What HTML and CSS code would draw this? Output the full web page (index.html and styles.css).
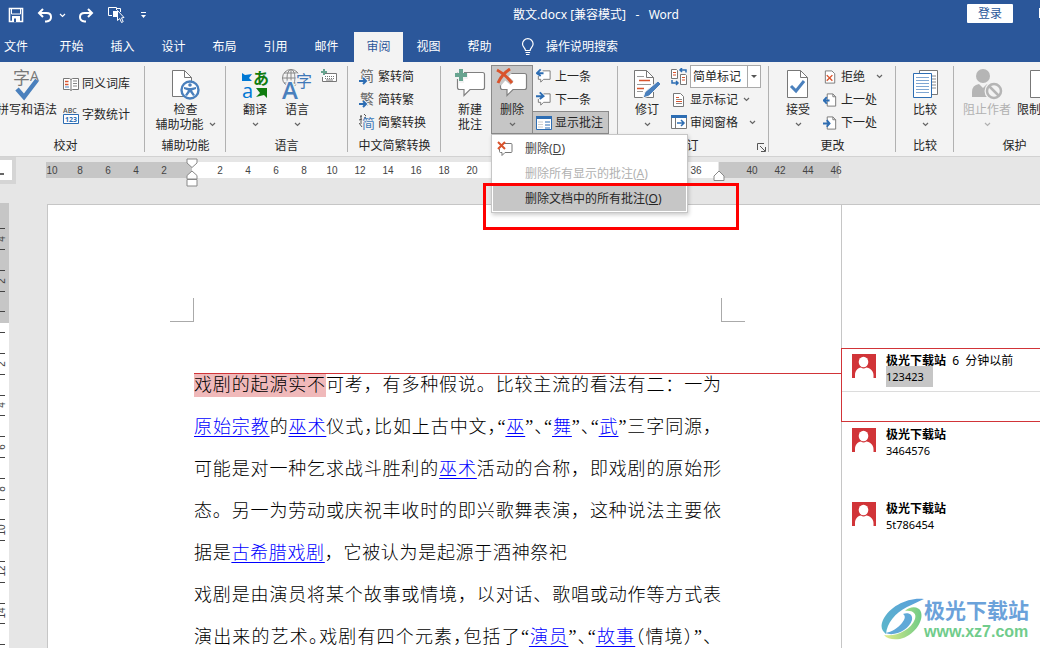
FILE: index.html
```
<!DOCTYPE html>
<html lang="zh-CN">
<head>
<meta charset="utf-8">
<meta name="viewport" content="width=device-width, initial-scale=1">
<title>散文.docx - Word</title>
<link rel="stylesheet" href="styles.css">
</head>
<body>
<svg class="defs" aria-hidden="true">
  <symbol id="chev" viewBox="0 0 7 5"><path d="M1 1l2.500 2.500L6 1" fill="none" stroke="currentColor" stroke-width="1.200"/></symbol>
  <symbol id="person" viewBox="0 0 24 24"><path fill="#d13438" d="M0 0h24v24H0z"/><ellipse cx="11.500" cy="8" rx="4.800" ry="5.300" fill="#fff"/><path fill="#fff" d="M3 24v-3c0-4 2.500-7 6-7.500 1.500 1.200 3.800 1.200 5.200 0 4 .5 7.300 3.500 7.300 7.500v3z"/></symbol>
  <symbol id="doc" viewBox="0 0 16 16"><path d="M4.500 1.500h6l3 3v10h-9z" fill="#fff" stroke="#777"/><path d="M10.500 1.500v3h3" fill="none" stroke="#777"/></symbol>
</svg>

<div class="app">
  <header class="titlebar">
    <div class="quick">
      <button type="button" class="q-save" aria-label="保存"><svg width="16" height="16" viewBox="0 0 16 16"><path d="M1.500 1.500h13v13h-13z" fill="none" stroke="#fff" stroke-width="1.600"/><path d="M3.500 2v5h9V2" fill="none" stroke="#fff"/><path d="M4 9h8v6H4z" fill="#fff"/><path d="M6 11.500h2V15H6z" fill="#2b579a"/></svg></button>
      <button type="button" class="q-undo" aria-label="撤消"><svg width="16" height="15" viewBox="0 0 16 15"><path d="M6 1L2 5l4 4M2 5h7.500c6 0 6 8 0 8.500H8" fill="none" stroke="#fff" stroke-width="2"/></svg></button>
      <button type="button" class="q-undo-more" aria-label="撤消选项"><svg width="7" height="5"><use href="#chev"/></svg></button>
      <button type="button" class="q-redo" aria-label="恢复"><svg width="16" height="15" viewBox="0 0 16 15"><path d="M10 1l4 4-4 4M14 5H6.500c-6 0-6 8 0 8.500H8" fill="none" stroke="#fff" stroke-width="2"/></svg></button>
      <button type="button" class="q-touch" aria-label="触摸模式"><svg width="18" height="18" viewBox="0 0 18 18"><path d="M5 9.500H1.500v-8h8V4M9.500 2.500h4V6" fill="none" stroke="#fff"/><path d="M6 5h4v6H6z" fill="#fff"/><path d="M10.500 4.500v10l2.300-2 1.700 4 1.700-.8-1.700-3.800 2.500-.4z" fill="#2b579a" stroke="#fff"/></svg></button>
      <button type="button" class="q-more" aria-label="自定义"><svg width="7" height="8" viewBox="0 0 7 8"><path d="M1 1.500h5" stroke="#fff"/><path d="M1 4h5L3.500 7z" fill="#fff"/></svg></button>
    </div>
    <h1 class="doc-title">散文.docx [兼容模式] &nbsp;&nbsp;- &nbsp;&nbsp;Word</h1>
    <div class="account"><button type="button" class="login">登录</button><span class="window-edge"></span></div>
  </header>

  <nav class="tabs" aria-label="功能区选项卡">
    <button type="button" class="tab file">文件</button>
    <button type="button" class="tab">开始</button>
    <button type="button" class="tab">插入</button>
    <button type="button" class="tab">设计</button>
    <button type="button" class="tab">布局</button>
    <button type="button" class="tab">引用</button>
    <button type="button" class="tab">邮件</button>
    <button type="button" class="tab active">审阅</button>
    <button type="button" class="tab">视图</button>
    <button type="button" class="tab">帮助</button>
    <button type="button" class="tell-me"><svg width="14" height="18" viewBox="0 0 14 18"><path d="M4.500 12.500c0-2.500-3-3.500-3-6.500a5.300 5.300 0 0 1 10.600 0c0 3-3 4-3 6.500zM4.500 14.500h4.600M5 16.500h3.500" fill="none" stroke="#fff" stroke-width="1.200"/></svg><span>操作说明搜索</span></button>
  </nav>

  <div class="ribbon">
    <section class="group g-proof">
      <div class="tools">
        <button type="button" class="big"><span class="pic"><svg width="28" height="34" viewBox="0 0 28 34"><text x="0" y="17" font-size="17" fill="#777">字</text><text x="17" y="14" font-size="14" class="latin" fill="#777">A</text><path d="M4 22l7 8 13-17" fill="none" stroke="#4a80bd" stroke-width="4.500"/></svg></span><span>拼写和语法</span></button>
        <div class="stack two">
          <button type="button" class="row"><svg width="16" height="16" viewBox="0 0 16 16"><path d="M.5 2.500h6l1.500 1 1.500-1h6v11h-6l-1.500 1-1.500-1h-6zM8 3v11" fill="#fff" stroke="#777"/><path d="M2 5.500h3.500M2 8.500h3.500" stroke="#d9532c" stroke-width="1.500"/><path d="M2 11h4" stroke="#4a80bd"/><path d="M10 5h4M10 7.500h4M10 10h4" stroke="#888"/></svg><span>同义词库</span></button>
          <button type="button" class="row"><svg width="16" height="18" viewBox="0 0 16 18"><text x="0" y="7" font-size="7" font-weight="600" class="latin" fill="#555">ABC</text><path d="M.5 8.500h15v9H.5z" fill="#fff" stroke="#2d6db3"/><text x="2" y="16" font-size="7" font-weight="bold" class="latin" fill="#2d6db3">123</text></svg><span>字数统计</span></button>
        </div>
      </div>
      <h2>校对</h2>
    </section>

    <section class="group g-access">
      <div class="tools">
        <button type="button" class="big"><span class="pic"><svg width="30" height="32" viewBox="0 0 30 32"><path d="M2.500 2.500h12l7 7v19h-19z" fill="#fff" stroke="#777"/><path d="M14.500 2.500v7h7" fill="none" stroke="#777"/><circle cx="20" cy="22" r="8.500" fill="#fff" stroke="#4a80bd" stroke-width="2.400"/><g fill="#4a80bd"><circle cx="20" cy="17" r="1.800"/><path d="M14 19l5 1h2l5-1v2l-4 1.500 3 4.500-2 1-3-4-3 4-2-1 3-4.500L14 21z"/></g></svg></span><span>检查</span><span class="line2">辅助功能 <svg width="7" height="5"><use href="#chev"/></svg></span></button>
      </div>
      <h2>辅助功能</h2>
    </section>

    <section class="group g-lang">
      <div class="tools">
        <button type="button" class="big w42"><span class="pic"><svg width="28" height="32" viewBox="0 0 28 32"><text x="12" y="16" font-size="16" font-weight="bold" fill="#107c10">あ</text><text x="1" y="30" font-size="20" class="latin" fill="#0078d4">a</text><path d="M1 5l3 2 7-1-3 4 3 3H1z" fill="#0078d4"/><path d="M15 20h11v10l-3-3-8 2 4-4z" fill="#107c10"/></svg></span><span>翻译</span><svg width="7" height="5"><use href="#chev"/></svg></button>
        <button type="button" class="big w42"><span class="pic"><svg width="32" height="32" viewBox="0 0 32 32"><g fill="none" stroke="#888"><circle cx="10" cy="10" r="8.500"/><ellipse cx="10" cy="10" rx="4" ry="8.500"/><path d="M1 10h18M3 5h14M3 15h14M10 1v18"/></g><text x="15" y="19" font-size="16" fill="#3f78b8" stroke="#f3f3f3" stroke-width="3" paint-order="stroke">字</text><text x="1" y="31" font-size="24" font-weight="600" class="latin" fill="#4a80bd" stroke="#f3f3f3" stroke-width="3" paint-order="stroke">A</text></svg></span><span>语言</span><svg width="7" height="5"><use href="#chev"/></svg></button>
        <button type="button" class="keyboard" aria-label="更新输入法词典"><svg width="16" height="14" viewBox="0 0 16 14"><path d="M3.500 4.500h12v8h-14V8" fill="#fff" stroke="#777"/><path d="M4 7.500h10M4 9.500h10" stroke="#777" stroke-dasharray="1 1"/><path d="M5 11h7" stroke="#777"/><path d="M0 3h6M3 0v6" stroke="#68a490" stroke-width="2"/></svg></button>
      </div>
      <h2>语言</h2>
    </section>

    <section class="group g-convert">
      <div class="tools">
        <div class="stack">
          <button type="button" class="row"><svg width="16" height="18" viewBox="0 0 16 18"><text x="1" y="13" font-size="14" fill="#666">简</text><path d="M0 13h6M4 10l3 3-3 3" fill="none" stroke="#f3f3f3" stroke-width="4"/><path d="M0 13h6M4 10l3 3-3 3" fill="none" stroke="#2d6db3" stroke-width="2"/></svg><span>繁转简</span></button>
          <button type="button" class="row"><svg width="16" height="18" viewBox="0 0 16 18"><text x="1" y="13" font-size="14" fill="#666">繁</text><path d="M0 13h6M4 10l3 3-3 3" fill="none" stroke="#f3f3f3" stroke-width="4"/><path d="M0 13h6M4 10l3 3-3 3" fill="none" stroke="#2d6db3" stroke-width="2"/></svg><span>简转繁</span></button>
          <button type="button" class="row"><svg width="16" height="18" viewBox="0 0 16 18"><path d="M1 3l2-1M0 6l3-1M2 1v9M0 9l3 4M5 0l2 2M5 4l2-1" stroke="#555" fill="none"/><text x="3" y="14" font-size="13" fill="#3f78b8">简</text></svg><span>简繁转换</span></button>
        </div>
      </div>
      <h2>中文简繁转换</h2>
    </section>

    <section class="group g-comment">
      <div class="tools">
        <button type="button" class="big w42"><span class="pic"><svg width="32" height="32" viewBox="0 0 32 32"><path d="M3.500 6.500q0-2 2-2h23q2 0 2 2v13q0 2-2 2H16l-6 6v-6H5.500q-2 0-2-2z" fill="#fff" stroke="#808080" stroke-width="1.200"/><path d="M0 8h14M7 0v15" stroke="#f3f3f3" stroke-width="6"/><path d="M1 7h12M7 1v12" stroke="#68a490" stroke-width="4"/></svg></span><span>新建</span><span>批注</span></button>
        <div class="delete-wrap">
          <button type="button" class="big pressed" aria-expanded="true"><span class="pic"><svg width="32" height="32" viewBox="0 0 32 32"><path d="M4.500 7.500q0-2 2-2h22q2 0 2 2v12q0 2-2 2H17l-6 6v-6H6.500q-2 0-2-2z" fill="#fff" stroke="#808080" stroke-width="1.200"/><path d="M2 3l14 12M15 2L3 16" stroke="#c6c6c6" stroke-width="5"/><path d="M1 2q8 4 15 13M14 1Q6 6 2 15" fill="none" stroke="#d9532c" stroke-width="3"/></svg></span><span>删除</span><svg width="7" height="5"><use href="#chev"/></svg></button>
          <div class="menu" role="menu">
            <button type="button" role="menuitem"><svg width="16" height="16" viewBox="0 0 16 16"><path d="M7 2.500h7q1 0 1 1v7q0 1-1 1H8l-3 3v-3H3.500q-1 0-1-1V8" fill="#fff" stroke="#777"/><path d="M1 1l7 7M8 1L1 8" stroke="#d9532c" stroke-width="2"/></svg><span>删除(<u>D</u>)</span></button>
            <button type="button" role="menuitem" disabled><span>删除所有显示的批注(<u>A</u>)</span></button>
            <button type="button" role="menuitem" class="chosen"><span>删除文档中的所有批注(<u>O</u>)</span></button>
          </div>
        </div>
        <div class="stack">
          <button type="button" class="row"><svg width="16" height="17" viewBox="0 0 17 17"><path d="M7 2.500h8v9H8l-3 3v-3H2.500V8" fill="#fff" stroke="#777"/><path d="M1 5h7M5 1L1 5l4 3" fill="none" stroke="#2d6db3" stroke-width="2"/></svg><span>上一条</span></button>
          <button type="button" class="row"><svg width="16" height="17" viewBox="0 0 17 17"><path d="M8 2.500h7v9H8l-3 3v-3H2.500V8" fill="#fff" stroke="#777"/><path d="M0 5h7M4 1l4 4-4 3" fill="none" stroke="#2d6db3" stroke-width="2"/></svg><span>下一条</span></button>
          <button type="button" class="row pressed"><svg width="16" height="14" viewBox="0 0 16 14"><path d="M.5.5h15v13H.5z" fill="#fff" stroke="#2d6db3"/><path d="M0 0h16v3H0z" fill="#2d6db3"/><path d="M9 6h5M9 9h5M9 12h5" stroke="#2d6db3"/><path d="M2 6h5M2 8.500h5M2 11h5" stroke="#ccc"/></svg><span>显示批注</span></button>
        </div>
      </div>
    </section>

    <section class="group g-track">
      <div class="tools">
        <button type="button" class="big w42"><span class="pic"><svg width="30" height="32" viewBox="0 0 30 32"><path d="M2.500 2.500h12l7 7v20h-19z" fill="#fff" stroke="#777"/><path d="M14.500 2.500v7h7" fill="none" stroke="#777"/><path d="M5 8.500h7M5 16.500h14M5 23.500h6" stroke="#999"/><path d="M7 12.500h11M5 20.500h7" stroke="#d9532c" stroke-width="1.500"/><path d="M11 30l2-6L26 13l3 3-12 12z" fill="#4a80bd" stroke="#f3f3f3"/></svg></span><span>修订</span><svg width="7" height="5"><use href="#chev"/></svg></button>
        <div class="stack">
          <div class="row combo-row"><svg width="16" height="18" viewBox="0 0 16 18"><path d="M.5 1.500h5l1 1v8h-6zM9.500 6.500h5l1 1v9h-6z" fill="#fff" stroke="#777"/><path d="M2 4.500h3M2 7h3M11 9.500h3M11 12h3" stroke="#d9532c"/><path d="M15 4.500V2H9M11 0L9 2l2 2M1 12v3h6M5 13l2 2-2 2" fill="none" stroke="#2d6db3" stroke-width="1.500"/></svg><label class="combo"><select aria-label="标记显示方式"><option>简单标记</option></select><svg class="drop" width="13" height="21" viewBox="0 0 13 21"><path d="M.5 0v21" stroke="#aaa"/><path d="M4 9h6l-3 3z" fill="#555"/></svg></label></div>
          <button type="button" class="row"><svg width="16" height="16" viewBox="0 0 16 16"><path d="M2.500 1.500h7l3 3v10h-10z" fill="#fff" stroke="#777"/><path d="M5 5.500h3M5 9.500h6" stroke="#d9532c"/><path d="M5 7.500h6M5 11.500h6" stroke="#888"/></svg><span>显示标记</span><svg class="gap2" width="7" height="5"><use href="#chev"/></svg></button>
          <button type="button" class="row"><svg width="16" height="15" viewBox="0 0 16 15"><path d="M.5.5h15v13H.5z" fill="#fff" stroke="#777"/><path d="M0 0h16v3H0z" fill="#2d6db3"/><path d="M4.500 3v11" stroke="#777"/><path d="M6 8h7M10 5l3 3-3 3" fill="none" stroke="#2d6db3" stroke-width="1.500"/></svg><span>审阅窗格</span><svg class="gap8" width="7" height="5"><use href="#chev"/></svg></button>
        </div>
      </div>
      <h2>修订</h2>
      <button type="button" class="launcher" aria-label="修订选项"><svg width="9" height="9" viewBox="0 0 9 9"><path d="M.5 7V.5H7M3 3l5 5M8.500 4v4.500H4" fill="none" stroke="#555"/></svg></button>
    </section>

    <section class="group g-change">
      <div class="tools">
        <button type="button" class="big w42"><span class="pic"><svg width="24" height="32" viewBox="0 0 24 32"><path d="M1.500 2.500h13l7 7v20h-20z" fill="#fff" stroke="#777"/><path d="M14.500 2.500v7h7" fill="none" stroke="#777"/><path d="M5 18l5 5 8-10" fill="none" stroke="#4a80bd" stroke-width="3"/></svg></span><span>接受</span><svg width="7" height="5"><use href="#chev"/></svg></button>
        <div class="stack">
          <button type="button" class="row"><svg width="15" height="16" viewBox="0 0 16 16"><path d="M2.500 1.500h7l3 3v10h-10z" fill="#fff" stroke="#777"/><path d="M4 6l6 6M10 6l-6 6" stroke="#d9532c" stroke-width="1.500"/></svg><span>拒绝</span><svg class="gap8" width="7" height="5"><use href="#chev"/></svg></button>
          <button type="button" class="row"><svg width="15" height="16" viewBox="0 0 16 16"><use href="#doc" width="16" height="16"/><path d="M0 8.500h7M4 5L1 8.500 4 12" fill="none" stroke="#2d6db3" stroke-width="2"/></svg><span>上一处</span></button>
          <button type="button" class="row"><svg width="15" height="16" viewBox="0 0 16 16"><use href="#doc" width="16" height="16"/><path d="M0 8.500h7M4 5l3 3.500L4 12" fill="none" stroke="#2d6db3" stroke-width="2"/></svg><span>下一处</span></button>
        </div>
      </div>
      <h2>更改</h2>
    </section>

    <section class="group g-compare">
      <div class="tools">
        <button type="button" class="big"><span class="pic"><svg width="26" height="32" viewBox="0 0 26 32"><path d="M7.500 2.500h18v24h-18z" fill="#fff" stroke="#777"/><path d="M20 8h4M20 11h4M20 14h4M20 17h4M20 20h4" stroke="#888"/><path d="M1.500 5.500h18v24h-18z" fill="#fff" stroke="#2d6db3"/><path d="M4 9.500h13M4 12.500h13M4 15.500h13M4 18.500h13M4 21.500h13M4 24.500h13" stroke="#7fa6d2"/></svg></span><span>比较</span><svg width="7" height="5"><use href="#chev"/></svg></button>
      </div>
      <h2>比较</h2>
    </section>

    <section class="group g-protect">
      <div class="tools">
        <button type="button" class="big" disabled><span class="pic"><svg width="32" height="32" viewBox="0 0 32 32"><circle cx="12" cy="8" r="7" fill="#b5b5b5"/><path d="M1 29v-5q0-7 7-8l4 4 4-4q6 1 7 7v6z" fill="#b5b5b5"/><circle cx="23" cy="23" r="9.500" fill="#f3f3f3"/><circle cx="23" cy="23" r="7" fill="none" stroke="#b5b5b5" stroke-width="2.500"/><path d="M18 18l10 10" stroke="#b5b5b5" stroke-width="2.500"/></svg></span><span>阻止作者</span><svg width="7" height="5"><use href="#chev"/></svg></button>
        <button type="button" class="big"><span class="pic"><svg width="24" height="32" viewBox="0 0 24 32"><path d="M1.500 2.500h13l7 7v20h-20z" fill="#fff" stroke="#777"/></svg></span><span>限制编辑</span></button>
      </div>
      <h2>保护</h2>
    </section>
  </div>

  <main class="workspace">
    <div class="ruler-row">
      <div class="tab-kind"><span></span></div>
      <div class="ruler">
        <div class="r-left"><span>10</span><span>8</span><span>6</span><span>4</span><span>2</span></div>
        <div class="r-mid"><span>2</span><span>4</span><span>6</span><span>8</span><span>10</span><span>12</span><span>14</span><span>16</span><span>18</span><span>20</span><span class="last">36</span></div>
        <div class="r-right"><span>40</span><span>42</span><span>44</span><span>46</span></div>
        <svg class="indent" width="12" height="29" viewBox="0 0 12 29"><path d="M1 1h10v4L6 9.500 1 5zM6 13l5 4.500V21H1v-3.500zM1 21.500h10V28H1z" fill="#fff" stroke="#888"/></svg>
        <svg class="indent right" width="12" height="11" viewBox="0 0 12 11"><path d="M6 1l5 5v4.500H1V6z" fill="#fff" stroke="#888"/></svg>
      </div>
    </div>
    <div class="desk">
      <div class="v-ruler">
        <svg width="9" height="560" viewBox="0 0 9 560"><path d="M0 0h9v120H0z" fill="#c6c6c6"/><path d="M0 25.500h5M0 46.500h5M0 67.500h5M0 88.500h5M0 108.500h5M0 129.500h5M0 150.500h5M0 171.500h5M0 192.500h5M0 212.500h5M0 233.500h5M0 254.500h5M0 275.500h5M0 296.500h5M0 316.500h5M0 337.500h5M0 358.500h5M0 379.500h5M0 400.500h5M0 420.500h5M0 441.500h5" stroke="#444"/><g font-size="10" fill="#444" text-anchor="middle" class="arial"><text transform="translate(5 36) rotate(-90)">4</text><text transform="translate(5 78) rotate(-90)">2</text><text transform="translate(5 161) rotate(-90)">2</text><text transform="translate(5 202) rotate(-90)">4</text><text transform="translate(5 244) rotate(-90)">6</text><text transform="translate(5 286) rotate(-90)">8</text><text transform="translate(5 327) rotate(-90)">10</text><text transform="translate(5 368) rotate(-90)">12</text><text transform="translate(5 410) rotate(-90)">14</text></g></svg>
      </div>
      <article class="page">
        <div class="corners"><i></i><i></i></div>
        <div class="text">
          <p><mark>戏剧的起源实不</mark>可考，有多种假说。比较主流的看法有二：一为</p>
          <p><a href="#">原始宗教</a>的<a href="#">巫术</a>仪式<b>，</b>比如上古中文<b>，</b>“<a href="#">巫</a>”<b>、</b>“<a href="#">舞</a>”<b>、</b>“<a href="#">武</a>”三字同源，</p>
          <p>可能是对一种乞求战斗胜利的<a href="#">巫术</a>活动的合称，即戏剧的原始形</p>
          <p>态。另一为劳动或庆祝丰收时的即兴歌舞表演，这种说法主要依</p>
          <p class="short">据是<a href="#">古希腊戏剧</a>，它被认为是起源于酒神祭祀</p>
          <p>戏剧是由演员将某个故事或情境，以对话、歌唱或动作等方式表</p>
          <p>演出来的艺术<b>。</b>戏剧有四个元素<b>，</b>包括了“<a href="#">演员</a>”<b>、</b>“<a href="#">故事</a><b>（</b>情境<b>）</b>”、</p>
        </div>
        <div class="connector"></div>
      </article>
      <aside class="comments" aria-label="批注">
        <div class="comment current"><svg width="24" height="24"><use href="#person"/></svg><div><h3>极光下载站 <small>&nbsp;6&nbsp; 分钟以前</small></h3><p class="selected">123423</p></div></div>
        <div class="comment"><svg width="24" height="24"><use href="#person"/></svg><div><h3>极光下载站</h3><p>3464576</p></div></div>
        <div class="comment"><svg width="24" height="24"><use href="#person"/></svg><div><h3>极光下载站</h3><p>5t786454</p></div></div>
      </aside>
    </div>
  </main>

  <div class="callout"></div>
  <div class="brand">
    <svg width="46" height="44" viewBox="0 0 46 44"><defs><linearGradient id="swirl" x1="0" y1="1" x2="1" y2="0"><stop offset="0" stop-color="#5bb7c9"/><stop offset="1" stop-color="#5b9fdc"/></linearGradient><linearGradient id="leaf" x1="0" y1="0" x2="1" y2="0"><stop offset="0" stop-color="#e2eb8a"/><stop offset="1" stop-color="#6fcb86"/></linearGradient></defs><path d="M44 1C28-1 10 8 3 22c-3 7-1 11 3 14 1-11 9-21 21-27 6-3 11-5 17-8z" fill="url(#swirl)"/><path d="M5 35c10 4 24-3 27-13 1-5-3-8-9-6 3 2 2 5-1 9-4 5-10 9-17 10z" fill="#60a9d8"/><path d="M4 37c12 2 27-5 31-16 2-6-3-9-10-8 5-5 14-5 16 1 3 10-8 24-21 27-7 1-13 0-16-4z" fill="url(#leaf)"/></svg>
    <div><strong>极光下载站</strong><span>www.xz7.com</span></div>
  </div>
</div>
</body>
</html>
```
FILE: styles.css
```
* { box-sizing: border-box; }
body { margin: 0; font: 12px/15px "Noto Sans", "Noto Sans CJK SC", sans-serif; color: #262626; background: #e6e6e6; }
button { font: inherit; color: inherit; background: none; border: 0; padding: 0; margin: 0; }
h1, h2, h3, p { margin: 0; font-size: 12px; font-weight: 400; }
svg { display: block; flex: none; }
.defs { position: absolute; width: 0; height: 0; }
.latin { font-family: "Open Sans", sans-serif; }
.arial { font-family: "Liberation Sans", sans-serif; }

.app { position: relative; height: 100vh; overflow: hidden; display: flex; flex-direction: column; }

.titlebar { flex: none; height: 32px; background: #2b579a; color: #fff; display: grid; grid-template-columns: 1fr auto 1fr; padding-left: 8px; }
.quick { display: flex; align-items: center; height: 30px; }
.q-undo { margin-left: 13px; }
.q-undo-more { margin-left: 6px; }
.q-redo { margin-left: 12px; }
.q-touch { margin-left: 13px; }
.q-more { margin-left: 15px; }
.doc-title { line-height: 30px; padding-left: 144px; white-space: nowrap; }
.account { display: flex; justify-content: flex-end; gap: 26px; padding-top: 4px; }
.login { width: 46px; height: 19px; background: #fff; color: #2b579a; border-radius: 1px; }
.window-edge { width: 1px; height: 10px; margin-top: 4px; background: #fff; }

.tabs { flex: none; height: 30px; background: #2b579a; color: #fff; display: flex; }
.tab { width: 51px; line-height: 28px; }
.tab.file { width: 46px; padding-right: 14px; }
.tab.active { width: 49px; margin-left: 2px; background: #f3f3f3; color: #2b579a; }
.tell-me { display: flex; align-items: center; gap: 11px; margin-left: 16px; padding-bottom: 1px; }

.ribbon { flex: none; height: 95px; background: #f3f3f3; border-bottom: 1px solid #d2d2d2; display: flex; }
.group { position: relative; flex: none; display: flex; flex-direction: column; padding-top: 3px; }
.group:not(:last-child)::after { content: ""; position: absolute; right: 0; top: 4px; bottom: 4px; width: 1px; background: #b1b1b1; }
.group h2 { text-align: center; line-height: 21px; }
.group use { color: #666; }
.tools { display: flex; height: 70px; white-space: nowrap; }
.g-proof { width: 145px; }
.g-proof h2 { padding-right: 14px; }
.g-proof .tools { gap: 6px; margin-left: -3px; }
.g-access { width: 81px; }
.g-access .tools { justify-content: center; }
.g-lang { width: 122px; padding-left: 8px; }
.g-lang h2 { padding-right: 9px; }
.g-convert { width: 93px; }
.g-convert .tools { padding-left: 11px; }
.g-comment { width: 177px; }
.g-comment .tools { padding-left: 8px; }
.g-track { width: 151px; }
.g-track .tools { padding-left: 8px; gap: 3px; }
.g-track h2 { padding-right: 14px; }
.g-change { width: 127px; }
.g-change .tools { padding-left: 8px; gap: 4px; }
.g-compare { width: 58px; }
.g-compare .tools { justify-content: center; }
.g-protect { flex: 1 0 86px; min-width: 0; overflow: hidden; }
.g-protect .tools { padding-left: 9px; gap: 6px; }
.g-protect h2 { width: 121px; }

.big { flex: none; display: flex; flex-direction: column; align-items: center; height: 69px; }
.big .pic { display: flex; align-items: center; justify-content: center; height: 37px; }
.big > svg { margin-top: 5px; }
.big:disabled { color: #b1b1b1; }
.big:disabled use { color: #b1b1b1; }
.w42 { width: 42px; }
.line2 { display: flex; align-items: center; gap: 5px; }
.keyboard { align-self: flex-start; margin: 4px 0 0 3px; }

.stack { display: flex; flex-direction: column; }
.row { display: flex; align-items: center; gap: 3px; height: 23px; }
.stack.two { padding-top: 3px; }
.stack.two .row { height: 31px; }
.gap2 { margin-left: 2px; }
.gap8 { margin-left: 8px; }
.pressed { background: #c6c6c6; border: 1px solid #8a8a8a; }
.g-comment .stack { margin-left: -1px; }
.g-comment .stack .row { padding-left: 4px; }
.g-comment .row.pressed { padding: 0 5px 0 3px; }
.delete-wrap { position: relative; }
.delete-wrap .big { width: 42px; }
.delete-wrap .pic { height: 36px; }
.menu { position: absolute; z-index: 3; top: 69px; left: 0; width: 197px; padding: 1px; background: #fff; border: 1px solid #c6c6c6; box-shadow: 1px 2px 4px #0003; }
.menu button { display: flex; align-items: center; width: 100%; height: 25px; padding-left: 32px; }
.menu button > svg { margin: 0 12px 0 -28px; }
.menu button:first-child { color: #444; }
.menu button:disabled { color: #b1b1b1; }
.menu .chosen { background: #c6c6c6; }
.combo { position: relative; display: flex; width: 71px; height: 23px; border: 1px solid #aaa; background: #fff; }
.combo select { appearance: none; width: 100%; font: inherit; color: inherit; background: none; border: 0; padding: 0 2px; }
.combo .drop { position: absolute; right: 0; top: 0; pointer-events: none; }
.launcher { position: absolute; right: 3px; bottom: 4px; }

.workspace { flex: 1; min-height: 0; display: flex; flex-direction: column; }
.ruler-row { flex: none; display: flex; height: 46px; gap: 30px; }
.tab-kind { width: 16px; height: 27px; padding: 3px 4px 3px 0; background: #d5d5d5; }
.tab-kind span { display: flex; height: 20px; background: #fff; }
.tab-kind span::after { content: ""; width: 4px; height: 2px; margin-top: 13px; background: #666; }
.ruler { position: relative; display: flex; height: 16px; margin-top: 5px; font: 10px/17px "Liberation Sans", sans-serif; color: #444; }
.ruler div { display: flex; }
.ruler span { flex: none; width: 28px; text-align: center; }
.r-left { width: 146px; padding-right: 14px; justify-content: flex-end; background: #c6c6c6; }
.r-mid { width: 526px; padding: 0 8px 0 14px; background: #fff; }
.r-mid .last { margin-left: auto; }
.r-right { width: 120px; margin-left: 1px; padding-left: 19px; background: #c6c6c6; }
.indent { position: absolute; left: 140px; top: -4px; }
.indent.right { left: 667px; top: 8px; }

.desk { flex: 1; min-height: 0; display: flex; }
.v-ruler { flex: none; width: 9px; margin-right: 38px; background: #fff; overflow: hidden; }
.page { position: relative; flex: none; width: 794px; margin-top: 1px; background: #fff; border: 1px solid #c6c6c6; border-width: 1px 0 0 1px; }
.corners { display: flex; justify-content: space-between; padding: 93px 96px 0 122px; }
.corners i { width: 24px; height: 24px; border: 1px solid #aaa; border-width: 0 1px 1px 0; }
.corners i + i { border-width: 0 0 1px 1px; }
.text { margin: 42px 120px 0 146px; color: #000; font-family: "Liberation Serif", "Noto Sans CJK SC", serif; }
.text p { font-size: 18px; font-weight: 300; line-height: 42px; white-space: nowrap; text-align: justify; text-align-last: justify; }
.text .short { width: 373px; }
.text b { font-weight: inherit; font-feature-settings: "halt"; }
.text a { color: #00f; text-decoration: underline 1px #00f; text-underline-offset: 3px; }
.text mark { background: #f0b9ba; color: inherit; padding: 2px 0; }
.connector { position: absolute; left: 146px; right: 0; top: 168px; height: 1px; background: #d13438; }

.comments { flex: 1; min-width: 0; margin-top: 1px; padding-top: 143px; background: #fff; border: 1px solid #c6c6c6; border-width: 1px 0 0 1px; color: #000; }
.comment { display: flex; gap: 10px; height: 74px; padding: 6px 0 0 10px; line-height: 17px; white-space: nowrap; }
.comment h3 { font-weight: 700; height: 12px; line-height: 13px; }
.comment small { font-size: 12px; font-weight: 400; }
.comment p { height: 21px; line-height: 21px; font-size: 11px; }
.comment .selected { width: 47px; background: #c6c6c6; }
.comment.current { margin-left: -1px; border: 1px solid #d13438; border-right: 0; padding-top: 5px; background: linear-gradient(#dcdcdc, #dcdcdc) 0 42px / 100% 1px no-repeat; }

.callout { position: absolute; z-index: 4; left: 483px; top: 183px; width: 256px; height: 47px; border: 3px solid #f00; pointer-events: none; }
.brand { position: absolute; right: 11px; bottom: 6px; display: flex; align-items: center; }
.brand svg { margin-right: -2px; }
.brand div { display: flex; flex-direction: column; }
.brand strong { font-size: 21px; line-height: 24px; color: #6ba2da; }
.brand span { font: 700 16px/20px "Liberation Sans", sans-serif; color: #70cc8b; }
```
